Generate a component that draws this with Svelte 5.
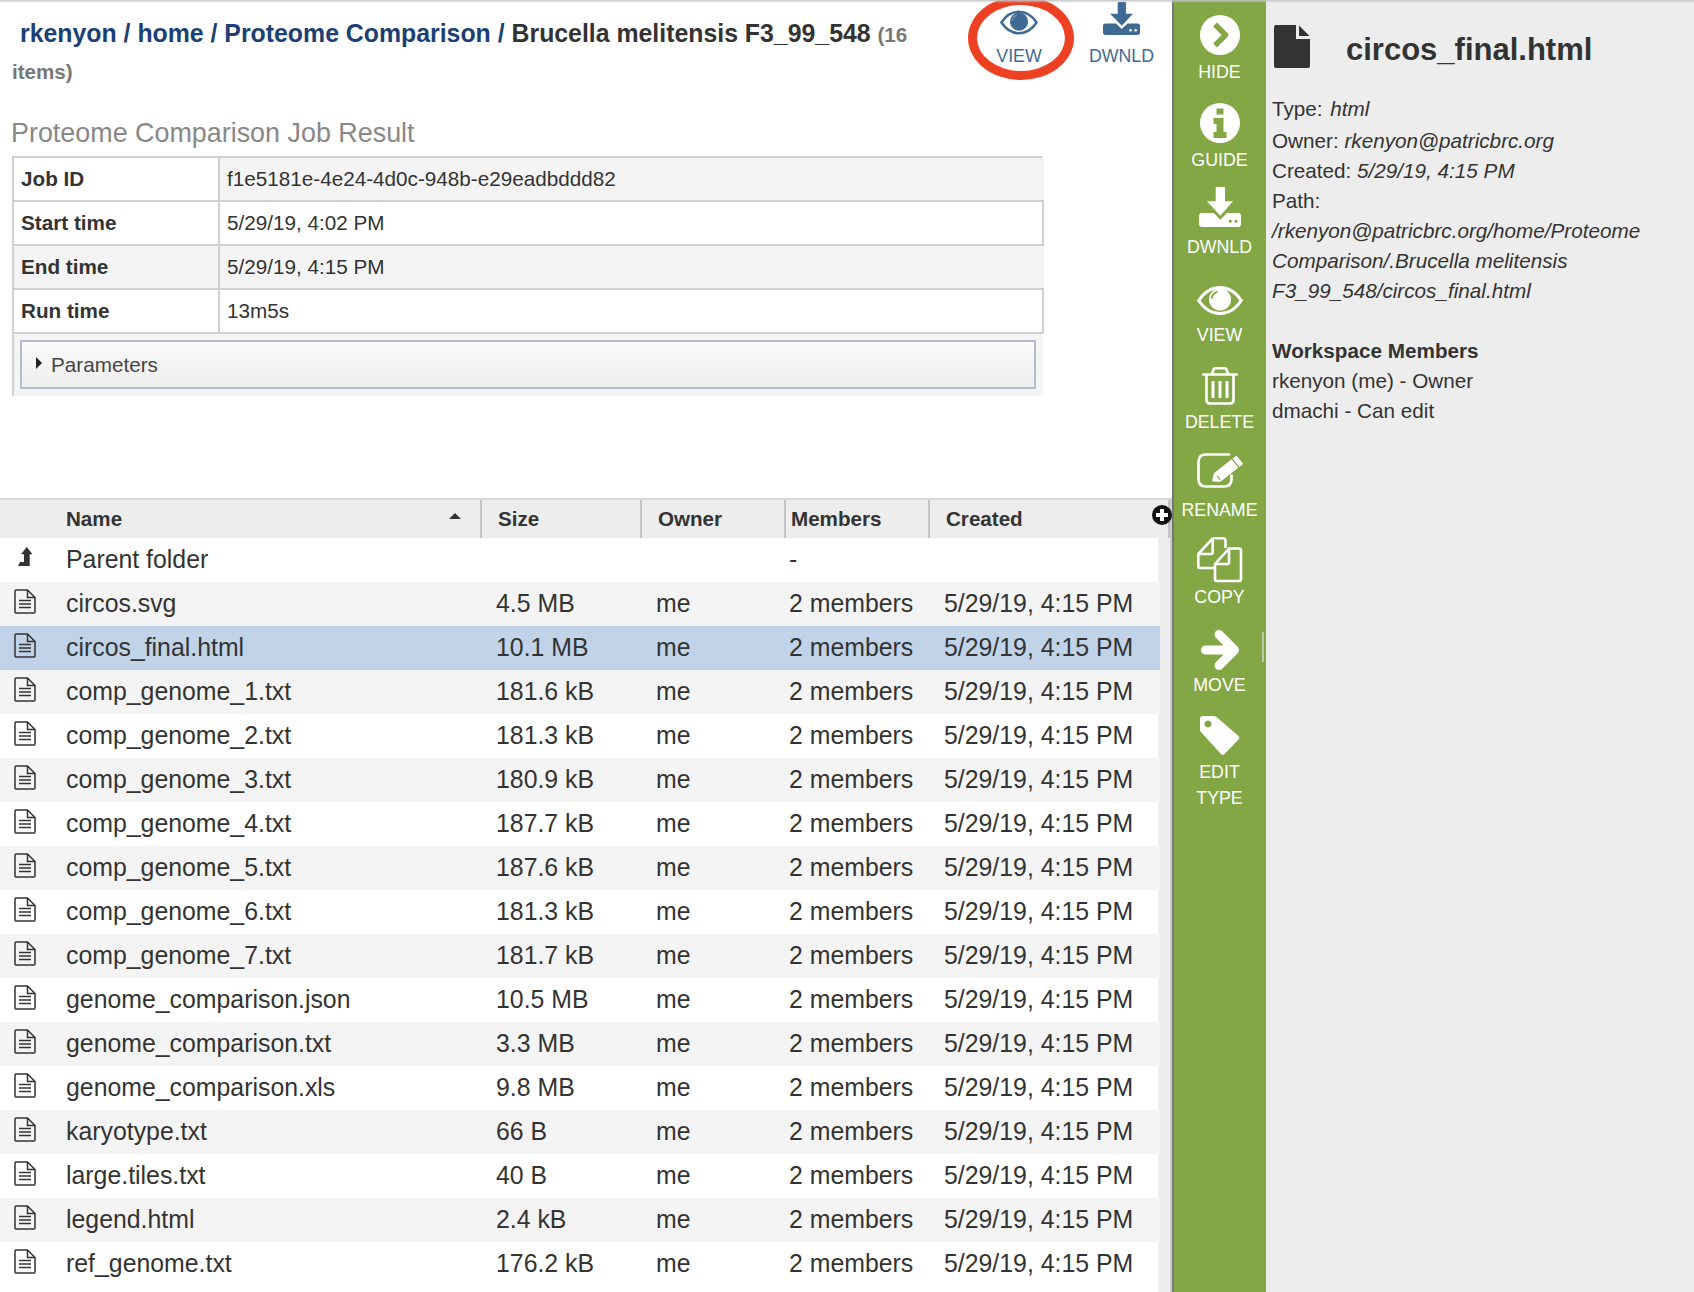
<script>
    const jobRows = [
        ['Job ID', 'f1e5181e-4e24-4d0c-948b-e29eadbddd82'],
        ['Start time', '5/29/19, 4:02 PM'],
        ['End time', '5/29/19, 4:15 PM'],
        ['Run time', '13m5s']
    ]

    const files = [
        ['circos.svg', '4.5 MB'],
        ['circos_final.html', '10.1 MB'],
        ['comp_genome_1.txt', '181.6 kB'],
        ['comp_genome_2.txt', '181.3 kB'],
        ['comp_genome_3.txt', '180.9 kB'],
        ['comp_genome_4.txt', '187.7 kB'],
        ['comp_genome_5.txt', '187.6 kB'],
        ['comp_genome_6.txt', '181.3 kB'],
        ['comp_genome_7.txt', '181.7 kB'],
        ['genome_comparison.json', '10.5 MB'],
        ['genome_comparison.txt', '3.3 MB'],
        ['genome_comparison.xls', '9.8 MB'],
        ['karyotype.txt', '66 B'],
        ['large.tiles.txt', '40 B'],
        ['legend.html', '2.4 kB'],
        ['ref_genome.txt', '176.2 kB']
    ]

    const sideButtons = [
        { icon: 'hide', label: ['HIDE'] },
        { icon: 'guide', label: ['GUIDE'] },
        { icon: 'download', label: ['DWNLD'] },
        { icon: 'eye', label: ['VIEW'] },
        { icon: 'trash', label: ['DELETE'] },
        { icon: 'rename', label: ['RENAME'] },
        { icon: 'copy', label: ['COPY'] },
        { icon: 'move', label: ['MOVE'] },
        { icon: 'tag', label: ['EDIT', 'TYPE'] }
    ]
</script>

{#snippet eye()}
    <svg class="ic-eye" viewBox="0 0 46 29">
        <path d="M1.700 14.500C8 5 15 1.500 23 1.500S38 5 44.300 14.500C38 24 31 27.500 23 27.500S8 24 1.700 14.500z" fill="none" stroke="currentColor" stroke-width="3"/>
        <circle cx="23" cy="13.500" r="11" fill="currentColor"/>
        <path class="eye-hi" d="M14.500 12.500C15.200 9 17.500 6.700 20.500 5.700" fill="none" stroke-width="1.800"/>
    </svg>
{/snippet}

{#snippet download()}
    <svg class="ic-dl" viewBox="0 0 42 40" preserveAspectRatio="none" fill="currentColor">
        <path d="M16.700 0H26v14.300h8L21.300 28.700 8 14.300h8.700z"/>
        <path fill-rule="evenodd" d="M3 26h11.700l6.600 6.700L28 26h11q3 0 3 3v8q0 3-3 3H3q-3 0-3-3v-8q0-3 3-3zm28.300 6.700a1.600 1.600 0 1 0 .01 0zm5.700 0a1.600 1.600 0 1 0 .01 0z"/>
    </svg>
{/snippet}

{#snippet sideIcon(name)}
    {#if name === 'hide'}
        <svg class="ic-circle" viewBox="0 0 40 40">
            <circle cx="20" cy="20" r="20" fill="#fff"/>
            <path d="M15 9.500l10.500 10.500L15 30.500" fill="none" stroke="#83a744" stroke-width="5.500" stroke-linejoin="round"/>
        </svg>
    {:else if name === 'guide'}
        <svg class="ic-circle" viewBox="0 0 40 40">
            <circle cx="20" cy="20" r="20" fill="#fff"/>
            <path fill="#83a744" d="M16.500 5.500h7v6h-7zM13.500 15h10v14h3v6h-13v-6h3v-8h-3z"/>
        </svg>
    {:else if name === 'download'}
        {@render download()}
    {:else if name === 'eye'}
        {@render eye()}
    {:else if name === 'trash'}
        <svg class="ic-trash" viewBox="0 0 36 38" fill="none" stroke="#fff" stroke-width="2.600">
            <path d="M1.300 7.500h33.400" stroke-linecap="round"/>
            <path d="M4.500 7.500V33q0 3.500 3.500 3.500h20q3.500 0 3.500-3.500V7.500"/>
            <path d="M10 7l1.500-4.500q.5-1.300 2-1.300h9q1.500 0 2 1.300L26 7"/>
            <path d="M11 14v17M18 14v17M25 14v17" stroke-width="3"/>
        </svg>
    {:else if name === 'rename'}
        <svg class="ic-rename" viewBox="0 0 46 36">
            <path fill="none" stroke="#fff" stroke-width="2.700" stroke-linecap="round" d="M32 1.500H9Q1.500 1.500 1.500 9v17q0 7.500 7.500 7.500h18q7.500 0 7.500-7.500v-3.500"/>
            <path fill="#fff" stroke="#fff" stroke-width="1" stroke-linejoin="round" d="M15.700 28L17.300 20.400 34.600 6.800 40.800 14.600 23.500 28.200zM36.200 5.600L39.400 3.100 45.600 10.900 42.400 13.400z"/>
            <path fill="none" stroke="#83a744" stroke-width="1.200" d="M20 22.800l3.200 4"/>
        </svg>
    {:else if name === 'copy'}
        <svg class="ic-copy" viewBox="0 0 46 46" fill="none" stroke="#fff" stroke-width="2.600" stroke-linejoin="round">
            <path d="M15.700 1.300H26q2.500 0 2.500 2.500V11M15.700 1.300L1.300 17v12.500q0 1.500 1.500 1.500H17M15.700 1.300V15.500q0 1.500-1.500 1.500H1.300"/>
            <path d="M32 11.500h10q2 0 2 2V42q0 2-2 2H20q-2 0-2-2V27zM32 11.500v14q0 1.500-1.500 1.500H18"/>
        </svg>
    {:else if name === 'move'}
        <svg class="ic-move" viewBox="0 0 38 40" fill="none" stroke="#fff" stroke-linecap="round" stroke-linejoin="round">
            <path stroke-width="9" d="M4.500 20h28M18 4.500L33.500 20 18 35.500"/>
        </svg>
    {:else if name === 'tag'}
        <svg class="ic-tag" viewBox="0 0 40 40">
            <path fill="#fff" fill-rule="evenodd" d="M3 0h10q2 0 3.500 1l22 19q1.700 1.800 0 3.500L24.500 38q-1.800 1.700-3.500 0L1 16q-1-1-1-2.500V3q0-3 3-3zm5 4.500a3.500 3.500 0 1 0 .01 0z"/>
        </svg>
    {/if}
{/snippet}

{#snippet docIcon()}
    <svg class="ic-doc" viewBox="0 0 22 25" fill="none" stroke="#333" stroke-width="1.500">
        <path d="M13.500 1H2Q1 1 1 2v21q0 1 1 1h18q1 0 1-1V8.500zM13.500 1v7.500H21"/>
        <path d="M5 11.500h12M5 15h12M5 18.500h12" stroke-width="1.700"/>
    </svg>
{/snippet}

<div class="shadow"></div>

<div class="page">
    <div class="main">
        <div class="top">
            <div class="crumbs">
                <a class="first" href="#a">rkenyon</a> / <a href="#a">home</a> / <a href="#a">Proteome Comparison</a> / <span class="current">Brucella melitensis F3_99_548</span> <span class="count">(16 items)</span>
            </div>
            <div class="actions">
                <button class="action view">
                    <span class="action-icon">{@render eye()}</span>
                    <span>VIEW</span>
                    <span class="circled"></span>
                </button>
                <button class="action">
                    <span class="action-icon">{@render download()}</span>
                    <span>DWNLD</span>
                </button>
            </div>
        </div>

        <h2 class="job-title">Proteome Comparison Job Result</h2>
        <table class="job">
            <tbody>
                {#each jobRows as row, i}
                    <tr class:shaded={i % 2 === 0}>
                        <th>{row[0]}</th>
                        <td>{row[1]}</td>
                    </tr>
                {/each}
                <tr class="params-row">
                    <td colspan="2">
                        <div class="params"><span class="caret"></span>Parameters</div>
                    </td>
                </tr>
            </tbody>
        </table>

        <div class="grid">
            <div class="head">
                <div class="cell name">Name<span class="sort"></span></div>
                <div class="cell">Size</div>
                <div class="cell">Owner</div>
                <div class="cell members">Members</div>
                <div class="cell">Created</div>
                <span class="add"></span>
            </div>
            <div class="row">
                <div class="cell name">
                    <svg class="ic-parent" viewBox="0 0 15 19" fill="#333"><path d="M8.800 0l5.700 7.300h-2.800V19H0l2-4h4V7.300H3z"/></svg>
                    Parent folder
                </div>
                <div class="cell"></div>
                <div class="cell"></div>
                <div class="cell members">-</div>
                <div class="cell"></div>
            </div>
            {#each files as file, i}
                <div class="row" class:shaded={i % 2 === 0} class:selected={i === 1}>
                    <div class="cell name">{@render docIcon()}{file[0]}</div>
                    <div class="cell">{file[1]}</div>
                    <div class="cell">me</div>
                    <div class="cell members">2 members</div>
                    <div class="cell">5/29/19, 4:15 PM</div>
                </div>
            {/each}
            <div class="row"></div>
        </div>
    </div>

    <nav class="side">
        {#each sideButtons as btn}
            <button class="side-btn">
                <span class="side-icon">{@render sideIcon(btn.icon)}</span>
                {#each btn.label as line}
                    <span class="side-label">{line}</span>
                {/each}
            </button>
        {/each}
        <span class="grip"></span>
    </nav>

    <aside class="info">
        <div class="info-title">
            <svg class="ic-file" viewBox="0 0 36 43" fill="#333">
                <path d="M2 0h20v14h14v27q0 2-2 2H2q-2 0-2-2V2q0-2 2-2z"/>
                <path d="M25 0.500L35.500 11H25z"/>
            </svg>
            <h1>circos_final.html</h1>
        </div>
        <div class="line">Type: <em class="type">html</em></div>
        <div class="line owner">Owner: <em>rkenyon@patricbrc.org</em></div>
        <div class="line">Created: <em>5/29/19, 4:15 PM</em></div>
        <div class="line">Path:</div>
        <div class="line"><em>/rkenyon@patricbrc.org/home/Proteome Comparison/.Brucella melitensis F3_99_548/circos_final.html</em></div>
        <div class="line members-title"><b>Workspace Members</b></div>
        <div class="line">rkenyon (me) - Owner</div>
        <div class="line">dmachi - Can edit</div>
    </aside>
</div>

<style>
    :global(body) {
        background: #fff;
    }

    .page {
        display: flex;
        height: 1292px;
        overflow: hidden;
        font-family: "Liberation Sans", Arial, sans-serif;
        color: #333;
        position: relative;
    }

    .shadow {
        position: absolute;
        top: 0;
        left: 0;
        width: 1694px;
        height: 3px;
        z-index: 5;
        background: linear-gradient(#c4c4c4, rgba(220, 220, 220, 0));
    }

    .main {
        box-sizing: border-box;
        width: 1174px;
        flex: none;
        border-right: 2px solid #777;
    }

    .top {
        display: flex;
        height: 117px;
    }

    .crumbs {
        box-sizing: border-box;
        width: 936px;
        flex: none;
        padding: 16px 0 0 12px;
        font-size: 24.85px;
        font-weight: bold;
        line-height: 36px;
        color: #1c3f76;
    }

    .crumbs a {
        color: #1c3f76;
        text-decoration: none;
    }

    .crumbs a.first {
        margin-left: 8px;
    }

    .current {
        color: #333;
    }

    .count {
        font-size: 20.6px;
        color: #777;
    }

    .actions {
        display: flex;
        align-items: flex-start;
        margin-left: 32px;
    }

    .action {
        all: unset;
        position: relative;
        display: flex;
        flex-direction: column;
        align-items: center;
        width: 102px;
        color: #3f6a94;
        font-size: 17.8px;
        line-height: 24px;
    }

    .action + .action {
        width: 103px;
    }

    .action-icon {
        display: flex;
        align-items: flex-end;
        justify-content: center;
        height: 44px;
        --eye-hi: rgba(255, 255, 255, 0.25);
    }

    .action .ic-eye {
        width: 38px;
        height: 25px;
        margin-bottom: 9px;
    }

    .action .ic-dl {
        width: 37px;
        height: 33px;
        margin-bottom: 9px;
    }

    .eye-hi {
        stroke: var(--eye-hi);
    }

    .circled {
        position: absolute;
        left: 0;
        top: -4px;
        width: 106px;
        height: 84px;
        box-sizing: border-box;
        border: 9.5px solid #ee4023;
        border-radius: 50%;
    }

    .job-title {
        margin: 0;
        padding-left: 11px;
        font-size: 26.9px;
        font-weight: normal;
        line-height: 32px;
        color: #888;
        height: 39px;
    }

    .job {
        table-layout: fixed;
        border-collapse: collapse;
        width: 1032px;
        margin-left: 12px;
        font-size: 20.7px;
    }

    .job th,
    .job td {
        box-sizing: border-box;
        height: 44px;
        border: 2px solid #d0d0d0;
        padding: 0 7px;
        text-align: left;
        background: #fff;
    }

    .job th {
        width: 206px;
    }

    .job tr.shaded td {
        background: #f4f4f4;
        border-right-color: #f4f4f4;
    }

    .job tr:nth-child(3) th {
        background: #f4f4f4;
    }

    .job .params-row td {
        height: 62px;
        padding: 6px 7px 7px 6px;
        background: #f4f4f4;
        border: 0;
        border-left: 2px solid #d0d0d0;
    }

    .params {
        box-sizing: border-box;
        display: flex;
        align-items: center;
        height: 49px;
        padding-left: 14px;
        border: 2px solid #b4bccb;
        background: linear-gradient(#fafafa, #eee);
        color: #444;
    }

    .caret {
        width: 0;
        height: 0;
        margin: -4px 9px 0 0;
        border-left: 6px solid #222;
        border-top: 6px solid transparent;
        border-bottom: 6px solid transparent;
    }

    .grid {
        margin-top: 102px;
        background: #eee;
        height: 794px;
        border-right: 2px solid #ccc;
    }

    .head,
    .row {
        display: grid;
        grid-template-columns: 482px 160px 144px 144px 1fr;
    }

    .head {
        position: relative;
        height: 40px;
        width: 1170px;
        box-sizing: border-box;
        border-top: 2px solid #d8d8d8;
        background: #ededed;
        font-size: 20.6px;
        font-weight: bold;
        line-height: 38px;
    }

    .head .cell {
        border-right: 2px solid #c4c4c4;
        padding-left: 16px;
    }

    .head .cell.name {
        padding-left: 66px;
        position: relative;
    }

    .head .cell.members {
        padding-left: 5px;
    }

    .sort {
        position: absolute;
        left: 449px;
        top: 13px;
        border-left: 6px solid transparent;
        border-right: 6px solid transparent;
        border-bottom: 6px solid #333;
    }

    .add {
        position: absolute;
        right: -2px;
        top: 5px;
        width: 20px;
        height: 20px;
        border-radius: 50%;
        background:
            linear-gradient(#fff, #fff) center / 12px 4px no-repeat,
            linear-gradient(#fff, #fff) center / 4px 12px no-repeat,
            #111;
    }

    .row {
        height: 44px;
        background: #fff;
        font-size: 24.85px;
        line-height: 44px;
        width: 1158px;
    }

    .row.shaded,
    .row.selected {
        background: #f4f4f4;
        width: 1160px;
    }

    .row.selected {
        background: #c0d3e8;
    }

    .row .cell {
        padding-left: 14px;
        white-space: nowrap;
    }

    .row .cell.name {
        position: relative;
        padding-left: 66px;
    }

    .row .cell.members {
        padding-left: 3px;
    }

    .ic-doc {
        position: absolute;
        left: 14px;
        top: 7px;
        width: 22px;
        height: 25px;
    }

    .ic-parent {
        position: absolute;
        left: 18px;
        top: 9px;
        width: 15px;
        height: 19px;
    }

    .side {
        position: relative;
        box-sizing: border-box;
        width: 92px;
        flex: none;
        padding: 11px 1px 0 0;
        background: #83a744;
        display: flex;
        flex-direction: column;
    }

    .side-btn {
        all: unset;
        display: flex;
        flex-direction: column;
        align-items: center;
        min-height: 87.5px;
        color: #fff;
        font-size: 17.8px;
        line-height: 26px;
    }

    .side-icon {
        display: flex;
        align-items: center;
        justify-content: center;
        height: 48px;
        color: #fff;
        --eye-hi: #83a744;
    }

    .ic-circle {
        width: 40px;
        height: 40px;
    }

    .side-icon .ic-dl {
        width: 42px;
        height: 40px;
        margin-bottom: 6px;
    }

    .side-icon .ic-eye {
        width: 46px;
        height: 29px;
        margin-top: 6px;
    }

    .ic-trash {
        width: 36px;
        height: 38px;
        margin-top: 2px;
    }

    .ic-rename {
        width: 46px;
        height: 36px;
        margin-bottom: 4px;
    }

    .ic-copy {
        width: 46px;
        height: 46px;
    }

    .ic-move {
        width: 38px;
        height: 40px;
        margin-top: 5px;
    }

    .ic-tag {
        width: 40px;
        height: 40px;
        margin-top: 2px;
    }

    .grip {
        position: absolute;
        right: 2px;
        top: 632px;
        width: 2px;
        height: 30px;
        background: #bcc9ae;
    }

    .info {
        flex: 1;
        box-sizing: border-box;
        padding: 25px 0 0 6px;
        background: #ededed;
        font-size: 20.7px;
        line-height: 30px;
    }

    .info-title {
        display: flex;
        align-items: center;
        height: 43px;
        margin-bottom: 26px;
    }

    .ic-file {
        margin-left: 2px;
        width: 36px;
        height: 43px;
    }

    .info h1 {
        margin: 7px 0 0 36px;
        font-size: 31px;
        font-weight: bold;
    }

    .type {
        margin-left: 2px;
    }

    .line.owner {
        margin-top: 2px;
    }

    .line.members-title {
        margin-top: 30px;
    }
</style>
